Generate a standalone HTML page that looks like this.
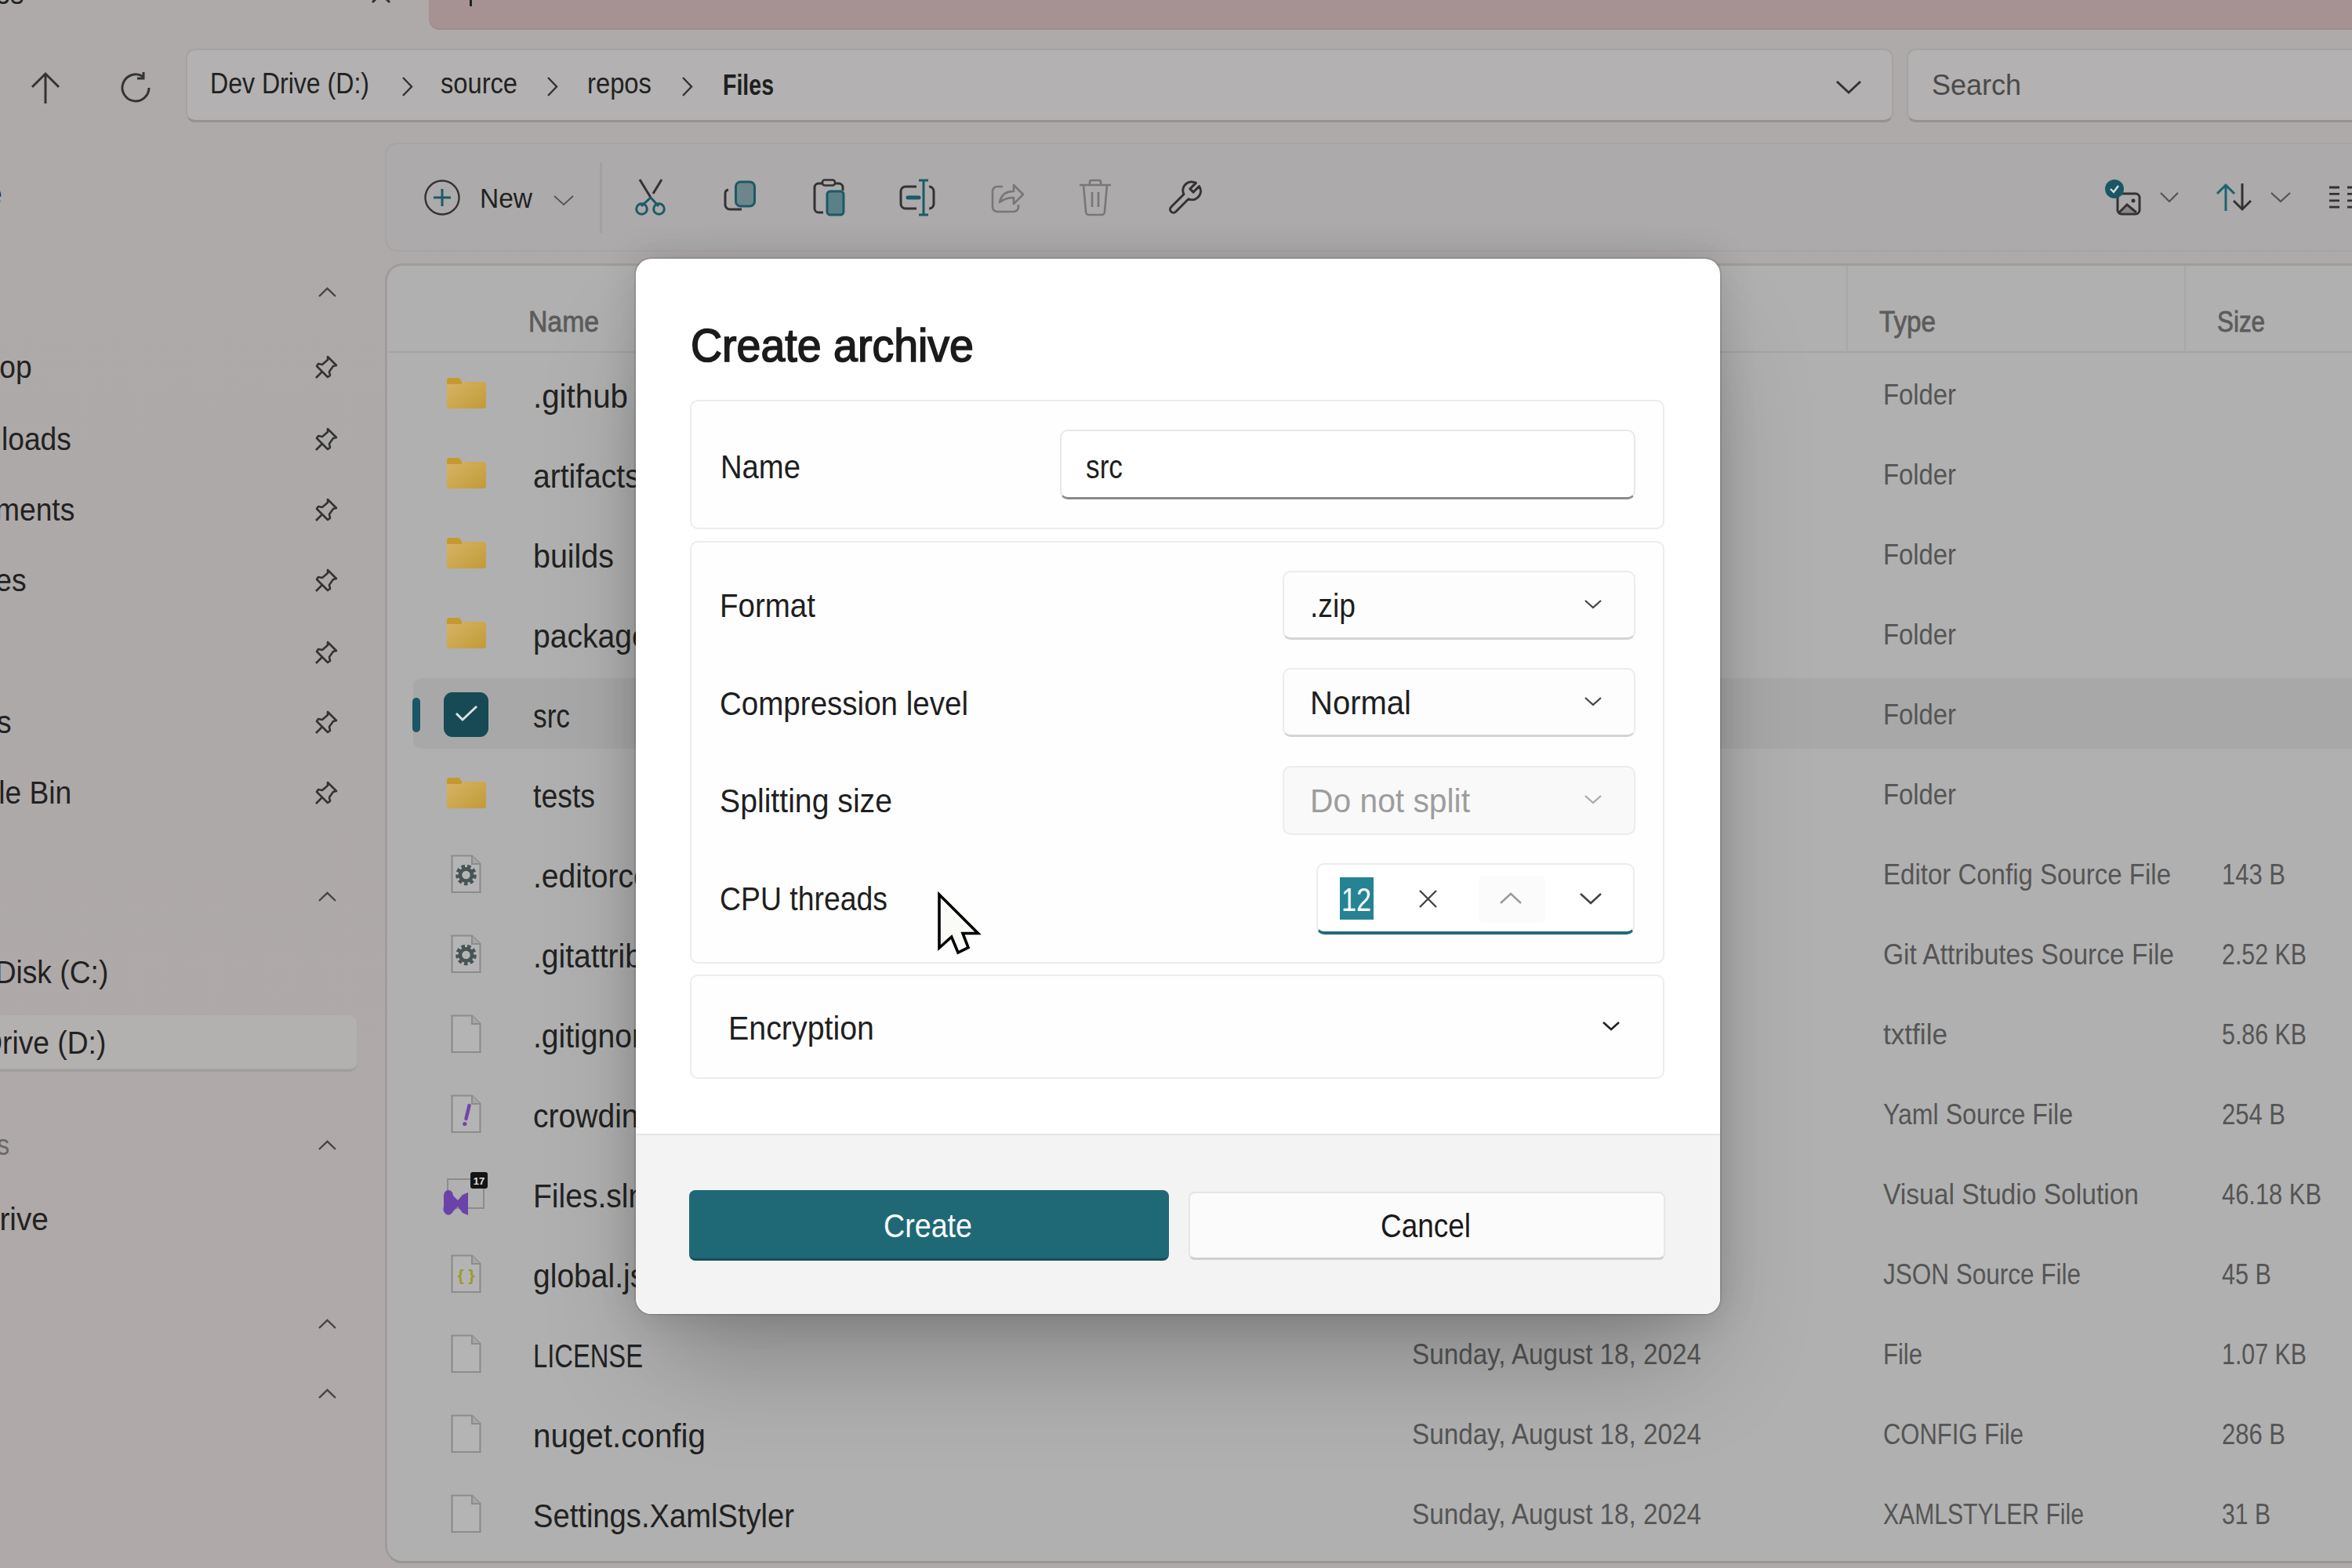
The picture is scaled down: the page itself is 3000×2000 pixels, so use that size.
<!DOCTYPE html><html><head><meta charset="utf-8"><style>html,body{margin:0;padding:0;width:3000px;height:2000px;overflow:hidden;position:relative;background:linear-gradient(to bottom,#adaaa9,#aea9a9 40%,#afa9aa);font-family:"Liberation Sans", sans-serif;}
.a{position:absolute;box-sizing:border-box;}
.t{position:absolute;white-space:nowrap;line-height:normal;font-family:"Liberation Sans", sans-serif;}
svg.a{overflow:visible}</style></head><body><div class="t" id="t0" style="right:2970px;transform-origin:right;top:-29.9px;font-size:39px;color:#222222;font-weight:400;transform:scaleX(0.8800);">Files</div>
<svg class="a" style="left:474px;top:-20px;" width="24" height="24" viewBox="0 0 24 24"><path d="M1 1L23 23M23 1L1 23" stroke="#333333" stroke-width="3"/></svg>
<div class="a" style="left:547px;top:-20px;width:2600px;height:58px;background:#a69293;border-radius:14px;box-shadow:inset 0 -2px 0 #9d8c8e;"></div>
<div class="a" style="left:599px;top:0px;width:3px;height:8px;background:#222;border-radius:0px;"></div>
<svg class="a" style="left:38px;top:91px;" width="40" height="42" viewBox="0 0 40 42"><path d="M20 41V3M3 20L20 3L37 20" stroke="#333333" stroke-width="3" fill="none"/></svg>
<svg class="a" style="left:152px;top:91px;" width="42" height="42" viewBox="0 0 42 42"><path d="M38 21A17 17 0 1 1 30 6.5" stroke="#333333" stroke-width="3" fill="none"/><path d="M31 1V9H23" stroke="#333333" stroke-width="3" fill="none"/></svg>
<div class="a" style="left:237px;top:62px;width:2178px;height:94px;background:#b3b1b1;border-radius:12px;border:2px solid #a5a2a2;border-bottom:3px solid #959292;"></div>
<div class="t" id="t1" style="left:268px;transform-origin:left;top:86.0px;font-size:37px;color:#222222;font-weight:400;transform:scaleX(0.8662);">Dev Drive (D:)</div>
<svg class="a" style="left:512px;top:97px;" width="16" height="27" viewBox="0 0 16 27"><path d="M2 2L13 13.5L2 25" stroke="#333333" stroke-width="2.4" fill="none"/></svg>
<svg class="a" style="left:697px;top:97px;" width="16" height="27" viewBox="0 0 16 27"><path d="M2 2L13 13.5L2 25" stroke="#333333" stroke-width="2.4" fill="none"/></svg>
<svg class="a" style="left:869px;top:97px;" width="16" height="27" viewBox="0 0 16 27"><path d="M2 2L13 13.5L2 25" stroke="#333333" stroke-width="2.4" fill="none"/></svg>
<div class="t" id="t2" style="left:562px;transform-origin:left;top:86.0px;font-size:37px;color:#222222;font-weight:400;transform:scaleX(0.8824);">source</div>
<div class="t" id="t3" style="left:749px;transform-origin:left;top:86.0px;font-size:37px;color:#222222;font-weight:400;transform:scaleX(0.8859);">repos</div>
<div class="t" id="t4" style="left:922px;transform-origin:left;top:88.0px;font-size:37px;color:#1f1f1f;font-weight:700;transform:scaleX(0.7708);">Files</div>
<svg class="a" style="left:2341px;top:102px;" width="34" height="18" viewBox="0 0 34 18"><path d="M2 2L17 16L32 2" stroke="#333333" stroke-width="3" fill="none"/></svg>
<div class="a" style="left:2432px;top:62px;width:700px;height:94px;background:#b3b1b1;border-radius:12px;border:2px solid #a5a2a2;border-bottom:3px solid #959292;"></div>
<div class="t" id="t5" style="left:2464px;transform-origin:left;top:88.0px;font-size:37px;color:#4a4a4a;font-weight:400;transform:scaleX(0.9724);">Search</div>
<div class="a" style="left:491px;top:182px;width:2600px;height:139px;background:#acaaaa;border-radius:16px;border:2px solid #a7a4a4;"></div>
<svg class="a" style="left:540px;top:228px;" width="48" height="48" viewBox="0 0 48 48"><circle cx="24" cy="24" r="21.5" stroke="#333333" stroke-width="2.4" fill="none"/><path d="M24 13V35M13 24H35" stroke="#1d5a66" stroke-width="3"/></svg>
<div class="t" id="t6" style="left:612px;transform-origin:left;top:232.8px;font-size:35px;color:#222222;font-weight:400;transform:scaleX(0.9567);">New</div>
<svg class="a" style="left:705px;top:248px;" width="28" height="16" viewBox="0 0 28 16"><path d="M2 2L14 13L26 2" stroke="#555" stroke-width="1.9" fill="none"/></svg>
<div class="a" style="left:765px;top:207px;width:3px;height:90px;background:#a3a0a0;border-radius:0px;"></div>
<svg class="a" style="left:806px;top:226px;" width="48" height="52" viewBox="0 0 48 52"><path d="M10 3L24 26M38 3L27 21" stroke="#333" stroke-width="3" fill="none"/><path d="M24 26L12 37M24 26L34 37" stroke="#1d5a66" stroke-width="3" fill="none"/><circle cx="12.5" cy="40.5" r="6.8" stroke="#1d5a66" stroke-width="3" fill="none"/><circle cx="34.5" cy="40.5" r="6.8" stroke="#1d5a66" stroke-width="3" fill="none"/></svg>
<svg class="a" style="left:920px;top:226px;" width="48" height="52" viewBox="0 0 48 52"><path d="M9 16A5 5 0 0 0 5 21V35A6 6 0 0 0 11 41H26" stroke="#333" stroke-width="3" fill="none"/><rect x="18.5" y="6" width="24" height="31" rx="6" fill="#6c868c" stroke="#1d5a66" stroke-width="3"/></svg>
<svg class="a" style="left:1036px;top:228px;" width="42" height="48" viewBox="0 0 42 48"><path d="M14 6H8A5 5 0 0 0 3 11V38A5 5 0 0 0 8 43H14" stroke="#333333" stroke-width="3" fill="none"/><path d="M30 6H34A5 5 0 0 1 39 11V15" stroke="#333333" stroke-width="3" fill="none"/><rect x="13" y="1.5" width="16" height="7" rx="3" stroke="#333333" stroke-width="2.6" fill="none"/><rect x="19" y="16" width="21" height="30" rx="4" fill="#5b8087" stroke="#1d5a66" stroke-width="3"/></svg>
<svg class="a" style="left:1147px;top:228px;" width="46" height="48" viewBox="0 0 46 48"><path d="M22 10H8A6 6 0 0 0 2 16V32A6 6 0 0 0 8 38H22" stroke="#333333" stroke-width="3" fill="none"/><path d="M38 10A6 6 0 0 1 44 16V32A6 6 0 0 1 38 38" stroke="#333333" stroke-width="3" fill="none"/><path d="M11 24H25" stroke="#1d5a66" stroke-width="5" stroke-linecap="round"/><path d="M31 2V46M25 2H37M25 46H37" stroke="#1d5a66" stroke-width="3"/></svg>
<svg class="a" style="left:1263px;top:230px;" width="44" height="44" viewBox="0 0 44 44"><path d="M16 8H9A6 6 0 0 0 3 14V34A6 6 0 0 0 9 40H30A6 6 0 0 0 36 34V31" stroke="#777" stroke-width="2.6" fill="none"/><path d="M12 28C14 18 21 14 30 14V6L42 18L30 30V22C22 22 17 24 12 28Z" stroke="#777" stroke-width="2.6" fill="none" stroke-linejoin="round"/></svg>
<svg class="a" style="left:1375px;top:228px;" width="44" height="48" viewBox="0 0 44 48"><path d="M2 8H42M15 8V4A2 2 0 0 1 17 2H27A2 2 0 0 1 29 4V8M7 8L10 42A4 4 0 0 0 14 46H30A4 4 0 0 0 34 42L37 8M18 17V36M26 17V36" stroke="#777" stroke-width="2.6" fill="none"/></svg>
<svg class="a" style="left:1487px;top:228px;" width="48" height="48" viewBox="0 0 24 24"><path d="M19.2 2.7L15.44 6.44L17.56 8.56L21.3 4.8A5.5 5.5 0 0 1 14.5 12.9L6.4 21A2.1 2.1 0 0 1 3.4 18L11.5 9.9A5.5 5.5 0 0 1 19.2 2.7Z" stroke="#333333" stroke-width="1.5" fill="none" stroke-linejoin="round"/></svg>
<svg class="a" style="left:2685px;top:229px;" width="48" height="48" viewBox="0 0 48 48"><rect x="16" y="18" width="28" height="26" rx="5" stroke="#333333" stroke-width="3" fill="none"/><path d="M18 42L28 32L40 42" stroke="#333333" stroke-width="3" fill="#888"/><circle cx="36" cy="27" r="2.5" fill="#333333"/><circle cx="12" cy="12" r="12" fill="#1b5664"/><path d="M7 12L11 16L17 8" stroke="#ddd" stroke-width="2.4" fill="none"/></svg>
<svg class="a" style="left:2754px;top:244px;" width="26" height="15" viewBox="0 0 26 15"><path d="M2 2L13 13L24 2" stroke="#555" stroke-width="2.2" fill="none"/></svg>
<svg class="a" style="left:2826px;top:234px;" width="48" height="36" viewBox="0 0 48 36"><path d="M13 35V2M2 13L13 2L24 13" stroke="#1d6272" stroke-width="3" fill="none"/><path d="M34 0V33M23 22L34 33L45 22" stroke="#333333" stroke-width="3" fill="none"/></svg>
<svg class="a" style="left:2895px;top:244px;" width="28" height="15" viewBox="0 0 28 15"><path d="M2 2L14 13L26 2" stroke="#555" stroke-width="2.2" fill="none"/></svg>
<svg class="a" style="left:2971px;top:236px;" width="40" height="36" viewBox="0 0 40 36"><path d="M0 3H13M0 11.4H13M0 19.8H13M0 28.2H13M23 3H40M23 11.4H40M23 19.8H40M23 28.2H40" stroke="#333333" stroke-width="2.8"/></svg>
<div class="t" id="t7" style="right:2997px;transform-origin:right;top:225.2px;font-size:40px;color:#222222;font-weight:400;transform:scaleX(0.9300);">Home</div>
<svg class="a" style="left:405px;top:366px;" width="25" height="14" viewBox="0 0 25 14"><path d="M2 12L12.5 2L23 12" stroke="#444" stroke-width="2.4" fill="none"/></svg>
<div class="t" id="t8" style="right:2959px;transform-origin:right;top:446.2px;font-size:40px;color:#222222;font-weight:400;transform:scaleX(0.9300);">Desktop</div>
<svg class="a" style="left:401px;top:452px;" width="30" height="32" viewBox="0 0 30 32"><path d="M10 22L2 30M17 3L28 14L24 15L19 22L20 27L17 29L3 15L5 12L10 13L17 7Z" stroke="#333333" stroke-width="2.6" fill="none" stroke-linejoin="round"/></svg>
<div class="t" id="t9" style="right:2909px;transform-origin:right;top:538.2px;font-size:40px;color:#222222;font-weight:400;transform:scaleX(0.9300);">Downloads</div>
<svg class="a" style="left:401px;top:544px;" width="30" height="32" viewBox="0 0 30 32"><path d="M10 22L2 30M17 3L28 14L24 15L19 22L20 27L17 29L3 15L5 12L10 13L17 7Z" stroke="#333333" stroke-width="2.6" fill="none" stroke-linejoin="round"/></svg>
<div class="t" id="t10" style="right:2905px;transform-origin:right;top:628.2px;font-size:40px;color:#222222;font-weight:400;transform:scaleX(0.9300);">Documents</div>
<svg class="a" style="left:401px;top:634px;" width="30" height="32" viewBox="0 0 30 32"><path d="M10 22L2 30M17 3L28 14L24 15L19 22L20 27L17 29L3 15L5 12L10 13L17 7Z" stroke="#333333" stroke-width="2.6" fill="none" stroke-linejoin="round"/></svg>
<div class="t" id="t11" style="right:2967px;transform-origin:right;top:718.2px;font-size:40px;color:#222222;font-weight:400;transform:scaleX(0.9300);">Pictures</div>
<svg class="a" style="left:401px;top:724px;" width="30" height="32" viewBox="0 0 30 32"><path d="M10 22L2 30M17 3L28 14L24 15L19 22L20 27L17 29L3 15L5 12L10 13L17 7Z" stroke="#333333" stroke-width="2.6" fill="none" stroke-linejoin="round"/></svg>
<div class="t" id="t12" style="right:3030px;transform-origin:right;top:810.2px;font-size:40px;color:#222222;font-weight:400;transform:scaleX(0.9300);">Music</div>
<svg class="a" style="left:401px;top:816px;" width="30" height="32" viewBox="0 0 30 32"><path d="M10 22L2 30M17 3L28 14L24 15L19 22L20 27L17 29L3 15L5 12L10 13L17 7Z" stroke="#333333" stroke-width="2.6" fill="none" stroke-linejoin="round"/></svg>
<div class="t" id="t13" style="right:2985px;transform-origin:right;top:899.2px;font-size:40px;color:#222222;font-weight:400;transform:scaleX(0.9300);">Videos</div>
<svg class="a" style="left:401px;top:905px;" width="30" height="32" viewBox="0 0 30 32"><path d="M10 22L2 30M17 3L28 14L24 15L19 22L20 27L17 29L3 15L5 12L10 13L17 7Z" stroke="#333333" stroke-width="2.6" fill="none" stroke-linejoin="round"/></svg>
<div class="t" id="t14" style="right:2909px;transform-origin:right;top:989.2px;font-size:40px;color:#222222;font-weight:400;transform:scaleX(0.9300);">Recycle Bin</div>
<svg class="a" style="left:401px;top:995px;" width="30" height="32" viewBox="0 0 30 32"><path d="M10 22L2 30M17 3L28 14L24 15L19 22L20 27L17 29L3 15L5 12L10 13L17 7Z" stroke="#333333" stroke-width="2.6" fill="none" stroke-linejoin="round"/></svg>
<svg class="a" style="left:405px;top:1137px;" width="25" height="14" viewBox="0 0 25 14"><path d="M2 12L12.5 2L23 12" stroke="#444" stroke-width="2.4" fill="none"/></svg>
<div class="t" id="t15" style="right:2862px;transform-origin:right;top:1218.2px;font-size:40px;color:#222222;font-weight:400;transform:scaleX(0.9300);">Local Disk (C:)</div>
<div class="a" style="left:-20px;top:1294px;width:476px;height:73px;background:#b3b0b0;border-radius:10px;border-bottom:3px solid #a09d9d;box-shadow:inset 0 0 0 1px #aaa7a7;"></div>
<div class="t" id="t16" style="right:2865px;transform-origin:right;top:1308.2px;font-size:40px;color:#222222;font-weight:400;transform:scaleX(0.9300);">Dev Drive (D:)</div>
<div class="t" id="t17" style="right:2988px;transform-origin:right;top:1439.9px;font-size:36px;color:#6a6868;font-weight:400;transform:scaleX(0.8800);">Cloud Drives</div>
<svg class="a" style="left:405px;top:1454px;" width="25" height="14" viewBox="0 0 25 14"><path d="M2 12L12.5 2L23 12" stroke="#444" stroke-width="2.4" fill="none"/></svg>
<div class="t" id="t18" style="right:2938px;transform-origin:right;top:1533.2px;font-size:40px;color:#222222;font-weight:400;transform:scaleX(0.9700);">OneDrive</div>
<svg class="a" style="left:405px;top:1682px;" width="25" height="14" viewBox="0 0 25 14"><path d="M2 12L12.5 2L23 12" stroke="#444" stroke-width="2.4" fill="none"/></svg>
<svg class="a" style="left:405px;top:1771px;" width="25" height="14" viewBox="0 0 25 14"><path d="M2 12L12.5 2L23 12" stroke="#444" stroke-width="2.4" fill="none"/></svg>
<div class="a" style="left:491px;top:336px;width:2600px;height:1658px;background:#b0b0b0;border-radius:22px;border:3px solid #a09c9c;border-bottom:3px solid #9a9696;"></div>
<div class="t" id="t19" style="left:674px;transform-origin:left;top:389.9px;font-size:36px;color:#5c5c5c;font-weight:400;transform:scaleX(0.9372);-webkit-text-stroke:0.8px #5c5c5c;">Name</div>
<div class="t" id="t20" style="left:2397px;transform-origin:left;top:389.9px;font-size:36px;color:#5c5c5c;font-weight:400;transform:scaleX(0.9225);-webkit-text-stroke:0.8px #5c5c5c;">Type</div>
<div class="t" id="t21" style="left:2828px;transform-origin:left;top:389.9px;font-size:36px;color:#5c5c5c;font-weight:400;transform:scaleX(0.8710);-webkit-text-stroke:0.8px #5c5c5c;">Size</div>
<div class="a" style="left:493px;top:448px;width:2600px;height:2px;background:#a6a5a5;border-radius:0px;"></div>
<div class="a" style="left:2355px;top:339px;width:2px;height:110px;background:#a8a7a7;border-radius:0px;"></div>
<div class="a" style="left:2786px;top:339px;width:2px;height:110px;background:#a8a7a7;border-radius:0px;"></div>
<div class="a" style="left:527px;top:865px;width:2500px;height:90px;background:#a8a8a8;border-radius:10px;"></div>
<div class="a" style="left:526px;top:890px;width:10px;height:44px;background:#1b5664;border-radius:5px;"></div>
<svg class="a" style="left:570px;top:482px;" width="50" height="39" viewBox="0 0 50 39"><defs><linearGradient id="fg" x1="0" y1="0" x2="1" y2="1"><stop offset="0" stop-color="#d6b668"/><stop offset="1" stop-color="#c39a38"/></linearGradient></defs><path d="M0 3A3 3 0 0 1 3 0H16L19 5H47A3 3 0 0 1 50 8V36A3 3 0 0 1 47 39H3A3 3 0 0 1 0 36Z" fill="url(#fg)"/><path d="M0 3A3 3 0 0 1 3 0H16L19 5V8H0Z" fill="#c49a2e"/></svg>
<div class="t" id="t22" style="left:680px;transform-origin:left;top:482.4px;font-size:42px;color:#222222;font-weight:400;transform:scaleX(0.9595);">.github</div>
<div class="t" id="t23" style="left:2402px;transform-origin:left;top:483.4px;font-size:36px;color:#555555;font-weight:400;transform:scaleX(0.9113);">Folder</div>
<svg class="a" style="left:570px;top:584px;" width="50" height="39" viewBox="0 0 50 39"><defs><linearGradient id="fg" x1="0" y1="0" x2="1" y2="1"><stop offset="0" stop-color="#d6b668"/><stop offset="1" stop-color="#c39a38"/></linearGradient></defs><path d="M0 3A3 3 0 0 1 3 0H16L19 5H47A3 3 0 0 1 50 8V36A3 3 0 0 1 47 39H3A3 3 0 0 1 0 36Z" fill="url(#fg)"/><path d="M0 3A3 3 0 0 1 3 0H16L19 5V8H0Z" fill="#c49a2e"/></svg>
<div class="t" id="t24" style="left:680px;transform-origin:left;top:584.4px;font-size:42px;color:#222222;font-weight:400;transform:scaleX(0.9300);">artifacts</div>
<div class="t" id="t25" style="left:2402px;transform-origin:left;top:585.4px;font-size:36px;color:#555555;font-weight:400;transform:scaleX(0.9113);">Folder</div>
<svg class="a" style="left:570px;top:686px;" width="50" height="39" viewBox="0 0 50 39"><defs><linearGradient id="fg" x1="0" y1="0" x2="1" y2="1"><stop offset="0" stop-color="#d6b668"/><stop offset="1" stop-color="#c39a38"/></linearGradient></defs><path d="M0 3A3 3 0 0 1 3 0H16L19 5H47A3 3 0 0 1 50 8V36A3 3 0 0 1 47 39H3A3 3 0 0 1 0 36Z" fill="url(#fg)"/><path d="M0 3A3 3 0 0 1 3 0H16L19 5V8H0Z" fill="#c49a2e"/></svg>
<div class="t" id="t26" style="left:680px;transform-origin:left;top:686.4px;font-size:42px;color:#222222;font-weight:400;transform:scaleX(0.9385);">builds</div>
<div class="t" id="t27" style="left:2402px;transform-origin:left;top:687.4px;font-size:36px;color:#555555;font-weight:400;transform:scaleX(0.9113);">Folder</div>
<svg class="a" style="left:570px;top:788px;" width="50" height="39" viewBox="0 0 50 39"><defs><linearGradient id="fg" x1="0" y1="0" x2="1" y2="1"><stop offset="0" stop-color="#d6b668"/><stop offset="1" stop-color="#c39a38"/></linearGradient></defs><path d="M0 3A3 3 0 0 1 3 0H16L19 5H47A3 3 0 0 1 50 8V36A3 3 0 0 1 47 39H3A3 3 0 0 1 0 36Z" fill="url(#fg)"/><path d="M0 3A3 3 0 0 1 3 0H16L19 5V8H0Z" fill="#c49a2e"/></svg>
<div class="t" id="t28" style="left:680px;transform-origin:left;top:788.4px;font-size:42px;color:#222222;font-weight:400;transform:scaleX(0.9300);">packages</div>
<div class="t" id="t29" style="left:2402px;transform-origin:left;top:789.4px;font-size:36px;color:#555555;font-weight:400;transform:scaleX(0.9113);">Folder</div>
<div class="a" style="left:566px;top:883px;width:57px;height:57px;background:#174a55;border-radius:11px;"></div>
<svg class="a" style="left:580px;top:898px;" width="30" height="24" viewBox="0 0 30 24"><path d="M2 12L10 20L28 3" stroke="#d8e2e4" stroke-width="3" fill="none"/></svg>
<div class="t" id="t30" style="left:680px;transform-origin:left;top:890.4px;font-size:42px;color:#222222;font-weight:400;transform:scaleX(0.8393);">src</div>
<div class="t" id="t31" style="left:2402px;transform-origin:left;top:891.4px;font-size:36px;color:#555555;font-weight:400;transform:scaleX(0.9113);">Folder</div>
<svg class="a" style="left:570px;top:992px;" width="50" height="39" viewBox="0 0 50 39"><defs><linearGradient id="fg" x1="0" y1="0" x2="1" y2="1"><stop offset="0" stop-color="#d6b668"/><stop offset="1" stop-color="#c39a38"/></linearGradient></defs><path d="M0 3A3 3 0 0 1 3 0H16L19 5H47A3 3 0 0 1 50 8V36A3 3 0 0 1 47 39H3A3 3 0 0 1 0 36Z" fill="url(#fg)"/><path d="M0 3A3 3 0 0 1 3 0H16L19 5V8H0Z" fill="#c49a2e"/></svg>
<div class="t" id="t32" style="left:680px;transform-origin:left;top:992.4px;font-size:42px;color:#222222;font-weight:400;transform:scaleX(0.8906);">tests</div>
<div class="t" id="t33" style="left:2402px;transform-origin:left;top:993.4px;font-size:36px;color:#555555;font-weight:400;transform:scaleX(0.9113);">Folder</div>
<svg class="a" style="left:575px;top:1090px;" width="39" height="50" viewBox="0 0 39 50"><path d="M1.5 1.5H27L37.5 12V48H1.5Z" fill="#b4b4b4" stroke="#8c8c8c" stroke-width="2.2"/><path d="M27 1.5V12H37.5" fill="#a6a6a6" stroke="#8c8c8c" stroke-width="2"/><g transform="translate(19.5 26) scale(0.95)"><circle r="10.5" fill="none" stroke="#485356" stroke-width="7" stroke-dasharray="4.2 3.05"/><circle r="8" fill="none" stroke="#485356" stroke-width="5"/></g></svg>
<div class="t" id="t34" style="left:680px;transform-origin:left;top:1094.4px;font-size:42px;color:#222222;font-weight:400;transform:scaleX(0.9300);">.editorconfig</div>
<div class="t" id="t35" style="left:2402px;transform-origin:left;top:1095.4px;font-size:36px;color:#555555;font-weight:400;transform:scaleX(0.9171);">Editor Config Source File</div>
<div class="t" id="t36" style="left:2834px;transform-origin:left;top:1095.4px;font-size:36px;color:#555555;font-weight:400;transform:scaleX(0.8610);">143 B</div>
<svg class="a" style="left:575px;top:1192px;" width="39" height="50" viewBox="0 0 39 50"><path d="M1.5 1.5H27L37.5 12V48H1.5Z" fill="#b4b4b4" stroke="#8c8c8c" stroke-width="2.2"/><path d="M27 1.5V12H37.5" fill="#a6a6a6" stroke="#8c8c8c" stroke-width="2"/><g transform="translate(19.5 26) scale(0.95)"><circle r="10.5" fill="none" stroke="#485356" stroke-width="7" stroke-dasharray="4.2 3.05"/><circle r="8" fill="none" stroke="#485356" stroke-width="5"/></g></svg>
<div class="t" id="t37" style="left:680px;transform-origin:left;top:1196.4px;font-size:42px;color:#222222;font-weight:400;transform:scaleX(0.9300);">.gitattributes</div>
<div class="t" id="t38" style="left:2402px;transform-origin:left;top:1197.4px;font-size:36px;color:#555555;font-weight:400;transform:scaleX(0.9318);">Git Attributes Source File</div>
<div class="t" id="t39" style="left:2834px;transform-origin:left;top:1197.4px;font-size:36px;color:#555555;font-weight:400;transform:scaleX(0.8431);">2.52 KB</div>
<svg class="a" style="left:575px;top:1294px;" width="39" height="50" viewBox="0 0 39 50"><path d="M1.5 1.5H27L37.5 12V48H1.5Z" fill="#b4b4b4" stroke="#8c8c8c" stroke-width="2.2"/><path d="M27 1.5V12H37.5" fill="#a6a6a6" stroke="#8c8c8c" stroke-width="2"/></svg>
<div class="t" id="t40" style="left:680px;transform-origin:left;top:1298.4px;font-size:42px;color:#222222;font-weight:400;transform:scaleX(0.9300);">.gitignore</div>
<div class="t" id="t41" style="left:2402px;transform-origin:left;top:1299.4px;font-size:36px;color:#555555;font-weight:400;transform:scaleX(0.9758);">txtfile</div>
<div class="t" id="t42" style="left:2834px;transform-origin:left;top:1299.4px;font-size:36px;color:#555555;font-weight:400;transform:scaleX(0.8431);">5.86 KB</div>
<svg class="a" style="left:575px;top:1396px;" width="39" height="50" viewBox="0 0 39 50"><path d="M1.5 1.5H27L37.5 12V48H1.5Z" fill="#b4b4b4" stroke="#8c8c8c" stroke-width="2.2"/><path d="M27 1.5V12H37.5" fill="#a6a6a6" stroke="#8c8c8c" stroke-width="2"/><path d="M23.5 14L19.5 31" stroke="#7346a6" stroke-width="4.5" stroke-linecap="round"/><circle cx="17.8" cy="37.5" r="2.6" fill="#7346a6"/></svg>
<div class="t" id="t43" style="left:680px;transform-origin:left;top:1400.4px;font-size:42px;color:#222222;font-weight:400;transform:scaleX(0.9300);">crowdin.yml</div>
<div class="t" id="t44" style="left:2402px;transform-origin:left;top:1401.4px;font-size:36px;color:#555555;font-weight:400;transform:scaleX(0.8915);">Yaml Source File</div>
<div class="t" id="t45" style="left:2834px;transform-origin:left;top:1401.4px;font-size:36px;color:#555555;font-weight:400;transform:scaleX(0.8610);">254 B</div>
<svg class="a" style="left:565px;top:1495px;" width="60" height="58" viewBox="0 0 60 58"><rect x="6" y="9" width="46" height="37" fill="none" stroke="#8c8c8c" stroke-width="2"/><rect x="35" y="0" width="22" height="21" rx="3" fill="#141414"/><text x="46" y="16" font-size="13" text-anchor="middle" fill="#e0e0e0" font-family="Liberation Sans" font-weight="700">17</text><path d="M1 30A6 7 0 0 1 13 30L19 36L25 29L32 26V55L25 52L19 44L13 50A6 7 0 0 1 1 44Z" fill="#6b43a8"/></svg>
<div class="t" id="t46" style="left:680px;transform-origin:left;top:1502.4px;font-size:42px;color:#222222;font-weight:400;transform:scaleX(0.9300);">Files.sln</div>
<div class="t" id="t47" style="left:2402px;transform-origin:left;top:1503.4px;font-size:36px;color:#555555;font-weight:400;transform:scaleX(0.9326);">Visual Studio Solution</div>
<div class="t" id="t48" style="left:2834px;transform-origin:left;top:1503.4px;font-size:36px;color:#555555;font-weight:400;transform:scaleX(0.8574);">46.18 KB</div>
<svg class="a" style="left:575px;top:1600px;" width="39" height="50" viewBox="0 0 39 50"><path d="M1.5 1.5H27L37.5 12V48H1.5Z" fill="#b4b4b4" stroke="#8c8c8c" stroke-width="2.2"/><path d="M27 1.5V12H37.5" fill="#a6a6a6" stroke="#8c8c8c" stroke-width="2"/><text x="19.5" y="34" font-size="21" text-anchor="middle" fill="#9c9a2a" font-family="Liberation Sans" font-weight="700">{ }</text></svg>
<div class="t" id="t49" style="left:680px;transform-origin:left;top:1604.4px;font-size:42px;color:#222222;font-weight:400;transform:scaleX(0.9300);">global.json</div>
<div class="t" id="t50" style="left:2402px;transform-origin:left;top:1605.4px;font-size:36px;color:#555555;font-weight:400;transform:scaleX(0.8747);">JSON Source File</div>
<div class="t" id="t51" style="left:2834px;transform-origin:left;top:1605.4px;font-size:36px;color:#555555;font-weight:400;transform:scaleX(0.8506);">45 B</div>
<svg class="a" style="left:575px;top:1702px;" width="39" height="50" viewBox="0 0 39 50"><path d="M1.5 1.5H27L37.5 12V48H1.5Z" fill="#b4b4b4" stroke="#8c8c8c" stroke-width="2.2"/><path d="M27 1.5V12H37.5" fill="#a6a6a6" stroke="#8c8c8c" stroke-width="2"/></svg>
<div class="t" id="t52" style="left:680px;transform-origin:left;top:1706.4px;font-size:42px;color:#222222;font-weight:400;transform:scaleX(0.7789);">LICENSE</div>
<div class="t" id="t53" style="left:2402px;transform-origin:left;top:1707.4px;font-size:36px;color:#555555;font-weight:400;transform:scaleX(0.8618);">File</div>
<div class="t" id="t54" style="left:2834px;transform-origin:left;top:1707.4px;font-size:36px;color:#555555;font-weight:400;transform:scaleX(0.8431);">1.07 KB</div>
<div class="t" id="t55" style="left:1801px;transform-origin:left;top:1707.4px;font-size:36px;color:#555555;font-weight:400;transform:scaleX(0.9233);">Sunday, August 18, 2024</div>
<svg class="a" style="left:575px;top:1804px;" width="39" height="50" viewBox="0 0 39 50"><path d="M1.5 1.5H27L37.5 12V48H1.5Z" fill="#b4b4b4" stroke="#8c8c8c" stroke-width="2.2"/><path d="M27 1.5V12H37.5" fill="#a6a6a6" stroke="#8c8c8c" stroke-width="2"/></svg>
<div class="t" id="t56" style="left:680px;transform-origin:left;top:1808.4px;font-size:42px;color:#222222;font-weight:400;transform:scaleX(0.9613);">nuget.config</div>
<div class="t" id="t57" style="left:2402px;transform-origin:left;top:1809.4px;font-size:36px;color:#555555;font-weight:400;transform:scaleX(0.8605);">CONFIG File</div>
<div class="t" id="t58" style="left:2834px;transform-origin:left;top:1809.4px;font-size:36px;color:#555555;font-weight:400;transform:scaleX(0.8610);">286 B</div>
<div class="t" id="t59" style="left:1801px;transform-origin:left;top:1809.4px;font-size:36px;color:#555555;font-weight:400;transform:scaleX(0.9233);">Sunday, August 18, 2024</div>
<svg class="a" style="left:575px;top:1906px;" width="39" height="50" viewBox="0 0 39 50"><path d="M1.5 1.5H27L37.5 12V48H1.5Z" fill="#b4b4b4" stroke="#8c8c8c" stroke-width="2.2"/><path d="M27 1.5V12H37.5" fill="#a6a6a6" stroke="#8c8c8c" stroke-width="2"/></svg>
<div class="t" id="t60" style="left:680px;transform-origin:left;top:1910.4px;font-size:42px;color:#222222;font-weight:400;transform:scaleX(0.9086);">Settings.XamlStyler</div>
<div class="t" id="t61" style="left:2402px;transform-origin:left;top:1911.4px;font-size:36px;color:#555555;font-weight:400;transform:scaleX(0.8363);">XAMLSTYLER File</div>
<div class="t" id="t62" style="left:2834px;transform-origin:left;top:1911.4px;font-size:36px;color:#555555;font-weight:400;transform:scaleX(0.8371);">31 B</div>
<div class="t" id="t63" style="left:1801px;transform-origin:left;top:1911.4px;font-size:36px;color:#555555;font-weight:400;transform:scaleX(0.9233);">Sunday, August 18, 2024</div>
<div class="a" style="left:811px;top:330px;width:1383px;height:1346px;border-radius:20px;box-shadow:0 0 50px rgba(0,0,0,0.14),0 80px 130px -30px rgba(0,0,0,0.26),0 0 0 2px rgba(0,0,0,0.10);background:#fff;overflow:hidden"></div>
<div class="a" style="left:811px;top:1446px;width:1383px;height:230px;background:#f3f3f3;border-radius:0px;border-top:2px solid #e6e6e6;border-radius:0 0 20px 20px;"></div>
<div class="t" id="t64" style="left:881px;transform-origin:left;top:405.8px;font-size:60px;color:#1b1b1b;font-weight:400;transform:scaleX(0.9252);-webkit-text-stroke:1.7px #1b1b1b;">Create archive</div>
<div class="a" style="left:880px;top:510px;width:1243px;height:165px;background:#fefefe;border-radius:10px;border:2px solid #ececec;"></div>
<div class="a" style="left:880px;top:690px;width:1243px;height:539px;background:#fefefe;border-radius:10px;border:2px solid #ececec;"></div>
<div class="a" style="left:880px;top:1243px;width:1243px;height:133px;background:#fefefe;border-radius:10px;border:2px solid #ececec;"></div>
<div class="t" id="t65" style="left:919px;transform-origin:left;top:572.4px;font-size:42px;color:#1f1f1f;font-weight:400;transform:scaleX(0.9103);">Name</div>
<div class="a" style="left:1352px;top:548px;width:734px;height:89px;background:#ffffff;border-radius:10px;border:2px solid #e8e8e8;border-bottom:3px solid #8a8a8a;"></div>
<div class="t" id="t66" style="left:1385px;transform-origin:left;top:572.4px;font-size:42px;color:#1f1f1f;font-weight:400;transform:scaleX(0.8393);">src</div>
<div class="t" id="t67" style="left:918px;transform-origin:left;top:749.4px;font-size:42px;color:#1f1f1f;font-weight:400;transform:scaleX(0.9172);">Format</div>
<div class="t" id="t68" style="left:918px;transform-origin:left;top:874.4px;font-size:42px;color:#1f1f1f;font-weight:400;transform:scaleX(0.9176);">Compression level</div>
<div class="t" id="t69" style="left:918px;transform-origin:left;top:998.4px;font-size:42px;color:#1f1f1f;font-weight:400;transform:scaleX(0.9331);">Splitting size</div>
<div class="t" id="t70" style="left:918px;transform-origin:left;top:1123.4px;font-size:42px;color:#1f1f1f;font-weight:400;transform:scaleX(0.8900);">CPU threads</div>
<div class="a" style="left:1636px;top:728px;width:450px;height:88px;background:#fdfdfd;border-radius:10px;border:2px solid #ececec;border-bottom:3px solid #d4d4d4;"></div>
<div class="t" id="t71" style="left:1671px;transform-origin:left;top:749.4px;font-size:42px;color:#1f1f1f;font-weight:400;transform:scaleX(0.8874);">.zip</div>
<svg class="a" style="left:2020px;top:764px;" width="24" height="14" viewBox="0 0 24 14"><path d="M2 2L12 11L22 2" stroke="#444" stroke-width="2.2" fill="none"/></svg>
<div class="a" style="left:1636px;top:852px;width:450px;height:88px;background:#fdfdfd;border-radius:10px;border:2px solid #ececec;border-bottom:3px solid #d4d4d4;"></div>
<div class="t" id="t72" style="left:1671px;transform-origin:left;top:873.4px;font-size:42px;color:#1f1f1f;font-weight:400;transform:scaleX(0.9530);">Normal</div>
<svg class="a" style="left:2020px;top:888px;" width="24" height="14" viewBox="0 0 24 14"><path d="M2 2L12 11L22 2" stroke="#444" stroke-width="2.2" fill="none"/></svg>
<div class="a" style="left:1636px;top:977px;width:450px;height:88px;background:#f9f9f9;border-radius:10px;border:2px solid #ececec;"></div>
<div class="t" id="t73" style="left:1671px;transform-origin:left;top:998.4px;font-size:42px;color:#9d9d9d;font-weight:400;transform:scaleX(0.9709);">Do not split</div>
<svg class="a" style="left:2020px;top:1013px;" width="24" height="14" viewBox="0 0 24 14"><path d="M2 2L12 11L22 2" stroke="#aaa" stroke-width="2.2" fill="none"/></svg>
<div class="a" style="left:1679px;top:1101px;width:406px;height:91px;background:#ffffff;border-radius:10px;border:2px solid #ececec;border-bottom:4px solid #1f6b79;"></div>
<div class="a" style="left:1709px;top:1119px;width:43px;height:54px;background:#258393;border-radius:0px;"></div>
<div class="t" id="t74" style="left:1711px;transform-origin:left;top:1124.4px;font-size:42px;color:#ffffff;font-weight:400;transform:scaleX(0.8134);">12</div>
<svg class="a" style="left:1809px;top:1134px;" width="25" height="25" viewBox="0 0 25 25"><path d="M2 2L23 23M23 2L2 23" stroke="#444" stroke-width="2.4"/></svg>
<div class="a" style="left:1886px;top:1117px;width:85px;height:60px;background:#fbfbfb;border-radius:8px;"></div>
<svg class="a" style="left:1912px;top:1138px;" width="30" height="16" viewBox="0 0 30 16"><path d="M2 14L15 2L28 14" stroke="#999" stroke-width="2.4" fill="none"/></svg>
<svg class="a" style="left:2014px;top:1138px;" width="30" height="17" viewBox="0 0 30 17"><path d="M2 2L15 14L28 2" stroke="#444" stroke-width="2.6" fill="none"/></svg>
<div class="t" id="t75" style="left:929px;transform-origin:left;top:1288.4px;font-size:42px;color:#1f1f1f;font-weight:400;transform:scaleX(0.9373);">Encryption</div>
<svg class="a" style="left:2043px;top:1302px;" width="24" height="14" viewBox="0 0 24 14"><path d="M2 2L12 11L22 2" stroke="#222" stroke-width="2.6" fill="none"/></svg>
<div class="a" style="left:879px;top:1518px;width:612px;height:90px;background:#1f6977;border-radius:8px;border-bottom:3px solid #164e58;"></div>
<div class="t" id="t76" style="left:1127px;transform-origin:left;top:1540.4px;font-size:42px;color:#ffffff;font-weight:400;transform:scaleX(0.8964);">Create</div>
<div class="a" style="left:1516px;top:1520px;width:608px;height:87px;background:#fbfbfb;border-radius:8px;border:2px solid #e6e6e6;border-bottom:3px solid #d0d0d0;"></div>
<div class="t" id="t77" style="left:1761px;transform-origin:left;top:1540.4px;font-size:42px;color:#1b1b1b;font-weight:400;transform:scaleX(0.8795);">Cancel</div>
<svg class="a" style="left:1196px;top:1139px;" width="56" height="80" viewBox="0 0 56 80"><path d="M2 2V70L17.7 56L26 76L39 69.5L32 51.5H51.5Z" fill="#fafaf6" stroke="#000" stroke-width="3.6" stroke-linejoin="miter"/></svg></body></html>
